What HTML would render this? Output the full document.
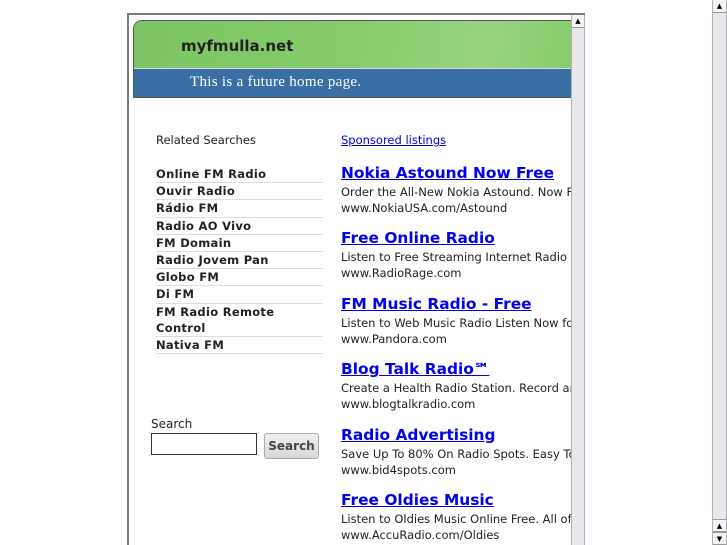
<!DOCTYPE html>
<html><head><style>
*{margin:0;padding:0;box-sizing:border-box}
body{width:727px;height:545px;background:#fff;position:relative;overflow:hidden;font-family:"DejaVu Sans",sans-serif;}
.frame{position:absolute;left:127px;top:13px;width:458px;height:532px;border-left:2px solid #7a7a7a;border-top:2px solid #7a7a7a;background:#fff;overflow:hidden}
.sb{position:absolute;background:#e8e8ec;border-left:1px solid #b0b0b8;border-right:1px solid #b0b0b8}
.btn{position:absolute;left:0;right:0;height:13px;background:#f4f4f6;border-bottom:1px solid #999;font-size:7px;text-align:center;line-height:12px;color:#000}
.hdr{position:absolute;left:4px;top:5px;width:440px;height:78px;border:1px solid #555;border-right:none;border-radius:9px 0 0 0;overflow:hidden}
.green{height:48px;background:linear-gradient(100deg,#7cc464 0%,#86cc6c 50%,#98d47e 80%,#86cc6c 100%);border-bottom:1px solid #ddd}
.green span{position:absolute;left:47px;top:16px;font-weight:bold;font-size:15px;color:#222}
.blue{height:28px;background:#3a6fa6;color:#fff;font-family:"Liberation Serif",serif;font-size:15px;letter-spacing:.3px;padding-left:56px;line-height:26px}
.left{position:absolute;left:27px;top:118px;width:167px;font-size:11.5px;color:#222}
.left ul{list-style:none;margin-top:19px}
.left li{font-weight:bold;border-bottom:1px solid #ddd;line-height:16.2px;letter-spacing:.3px}
.right{position:absolute;left:212px;top:118px;font-size:11.5px;color:#222;white-space:nowrap}
.right a{color:#00e;text-decoration:underline}
.ad{margin-top:12.4px}
.ad a.t{font-size:15.4px;font-weight:bold;display:block;line-height:20px;margin-bottom:1px}
.ad div{line-height:16px}
.srch{position:absolute;left:22px;top:402px;font-size:12px;color:#222}
.srch input{position:absolute;top:16px;left:0;width:106px;height:22px;border:1px solid #333}
.srch .b{position:absolute;top:16px;left:113px;width:55px;height:26px;border:1px solid #aaa;border-radius:3px;background:linear-gradient(#f0f0f0,#d8d8d8);font-weight:bold;font-size:12px;color:#444;text-align:center;line-height:24px}
</style></head><body>
<div class="frame">
 <div class="hdr"><div class="green"><span>myfmulla.net</span></div><div class="blue">This is a future home page.</div></div>
 <div class="left">Related Searches
  <ul><li>Online FM Radio</li><li>Ouvir Radio</li><li>Rádio FM</li><li>Radio AO Vivo</li><li>FM Domain</li><li>Radio Jovem Pan</li><li>Globo FM</li><li>Di FM</li><li>FM Radio Remote Control</li><li>Nativa FM</li></ul>
 </div>
 <div class="srch">Search<input type="text"><div class="b">Search</div></div>
 <div class="right"><a>Sponsored listings</a>
  <div class="ad" style="margin-top:16px"><a class="t">Nokia Astound Now Free</a><div>Order the All-New Nokia Astound. Now Free</div><div>www.NokiaUSA.com/Astound</div></div>
  <div class="ad"><a class="t">Free Online Radio</a><div>Listen to Free Streaming Internet Radio Now</div><div>www.RadioRage.com</div></div>
  <div class="ad"><a class="t">FM Music Radio - Free</a><div>Listen to Web Music Radio Listen Now for Free</div><div>www.Pandora.com</div></div>
  <div class="ad"><a class="t">Blog Talk Radio℠</a><div>Create a Health Radio Station. Record and</div><div>www.blogtalkradio.com</div></div>
  <div class="ad"><a class="t">Radio Advertising</a><div>Save Up To 80% On Radio Spots. Easy To Use</div><div>www.bid4spots.com</div></div>
  <div class="ad"><a class="t">Free Oldies Music</a><div>Listen to Oldies Music Online Free. All of the</div><div>www.AccuRadio.com/Oldies</div></div>
 </div>
 <div class="sb" style="left:442px;top:0;width:14px;height:532px"><div class="btn" style="top:0">▲</div></div>
</div>
<div class="sb" style="left:712px;top:0;width:15px;height:545px"><div class="btn" style="top:0">▲</div><div class="btn" style="top:auto;bottom:13px;border-top:1px solid #999">▲</div><div class="btn" style="top:auto;bottom:0;border-top:1px solid #999">▼</div></div>
</body></html>
